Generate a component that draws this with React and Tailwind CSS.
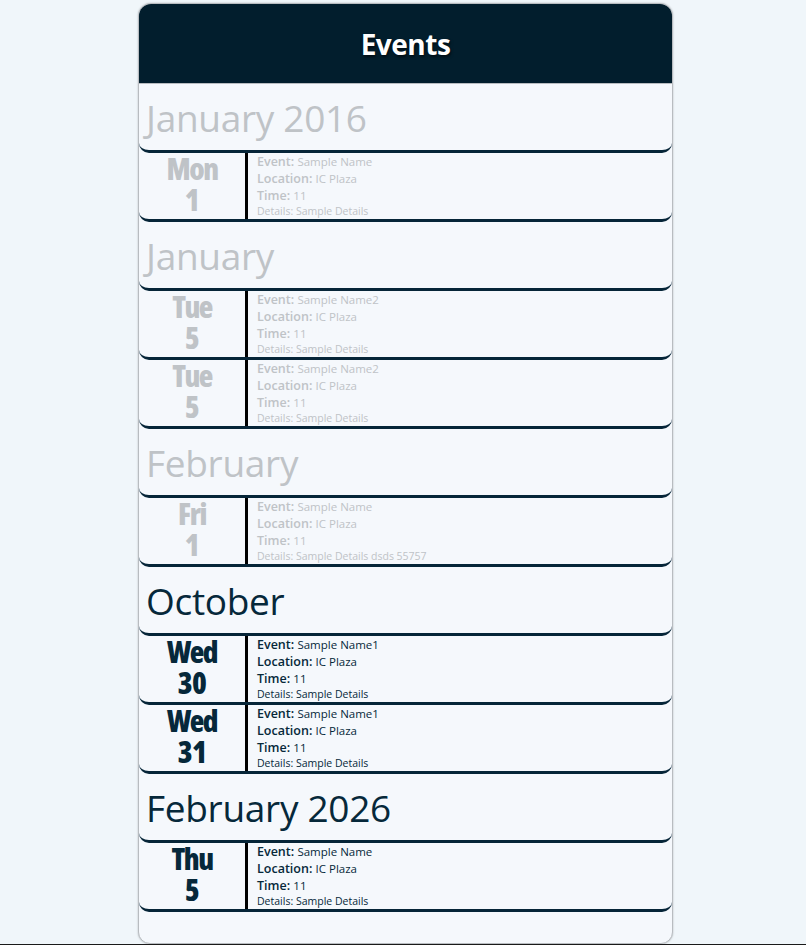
import React from 'react';

const SECTIONS = [
    {
        month: 'January 2016',
        past: true,
        events: [{ day: 'Mon', date: '1', name: 'Sample Name', details: 'Sample Details' }]
    },
    {
        month: 'January',
        past: true,
        events: [
            { day: 'Tue', date: '5', name: 'Sample Name2', details: 'Sample Details' },
            { day: 'Tue', date: '5', name: 'Sample Name2', details: 'Sample Details' }
        ]
    },
    {
        month: 'February',
        past: true,
        events: [{ day: 'Fri', date: '1', name: 'Sample Name', details: 'Sample Details dsds 55757' }]
    },
    {
        month: 'October',
        past: false,
        events: [
            { day: 'Wed', date: '30', name: 'Sample Name1', details: 'Sample Details' },
            { day: 'Wed', date: '31', name: 'Sample Name1', details: 'Sample Details' }
        ]
    },
    {
        month: 'February 2026',
        past: false,
        events: [{ day: 'Thu', date: '5', name: 'Sample Name', details: 'Sample Details' }]
    }
];

const bodyFont = "font-['Open_Sans','Noto_Sans',sans-serif]";
const dayFont = "font-['Open_Sans','DejaVu_Sans',sans-serif]";

const EventRow = ({ ev, past }) => {
    const tone = past ? 'text-[#bfc3c7]' : 'text-[#06283a]';
    return (
        <div className="flex h-[69px] border-b-[3px] border-[#062538] rounded-b-[10px]">
            <div className={`w-[106px] flex flex-col items-center ${dayFont} font-extrabold font-stretch-[75%] ${tone}`}>
                <span className="text-[30px] leading-[32px] tracking-[-1.5px]">{ev.day}</span>
                <span className="text-[30px] leading-[30px] tracking-[-0.5px]">{ev.date}</span>
            </div>
            <div className="w-[3px] bg-black" />
            <div className={`pl-[9px] flex flex-col ${bodyFont} ${tone}`}>
                <div className="leading-[17px] text-[12.5px]">
                    <span className="font-semibold">Event:</span> <span className="text-[11.5px]">{ev.name}</span>
                </div>
                <div className="leading-[17px] text-[12.5px]">
                    <span className="font-semibold">Location:</span> <span className="text-[11.5px]">IC Plaza</span>
                </div>
                <div className="leading-[17px] text-[12.5px]">
                    <span className="font-semibold">Time:</span> <span className="text-[11.5px]">11</span>
                </div>
                <div className="leading-[15px] text-[10.5px]">Details: {ev.details}</div>
            </div>
        </div>
    );
};

const App = () => {
    return (
        <div className="w-[806px] h-[945px] bg-[#f0f6fa] flex flex-col overflow-hidden">
            <div className="flex-1 flex pl-[138px] pt-[3px]">
                <div className="w-[535px] h-[941px] bg-[#f5f8fc] border border-[#b8bcc0] rounded-t-[13px] rounded-b-[12px] shadow-[0_0_2px_rgba(0,0,0,0.25)] overflow-hidden flex flex-col">
                    {/* Header */}
                    <div className="h-[80px] shrink-0 bg-[#021e2d] border-b border-[#b8bcc0] flex items-center justify-center">
                        <h1 className={`${bodyFont} text-white text-[28px] font-bold tracking-[-0.5px] [text-shadow:1px_2px_3px_rgba(0,0,0,0.6)]`}>Events</h1>
                    </div>

                    {SECTIONS.map((sec, i) => (
                        <div key={i}>
                            <div className="h-[69px] border-b-[3px] border-[#062538] rounded-b-[10px] flex items-center pl-[7px]">
                                <span className={`${bodyFont} font-normal text-[37px] tracking-[-0.3px] leading-none ${sec.past ? 'text-[#bfc3c7]' : 'text-[#06283a]'}`}>{sec.month}</span>
                            </div>
                            {sec.events.map((ev, j) => (
                                <EventRow key={j} ev={ev} past={sec.past} />
                            ))}
                        </div>
                    ))}
                </div>
            </div>
            <div className="h-[2px] shrink-0 bg-[#1a1a1a]" />
        </div>
    );
};

export default App;
